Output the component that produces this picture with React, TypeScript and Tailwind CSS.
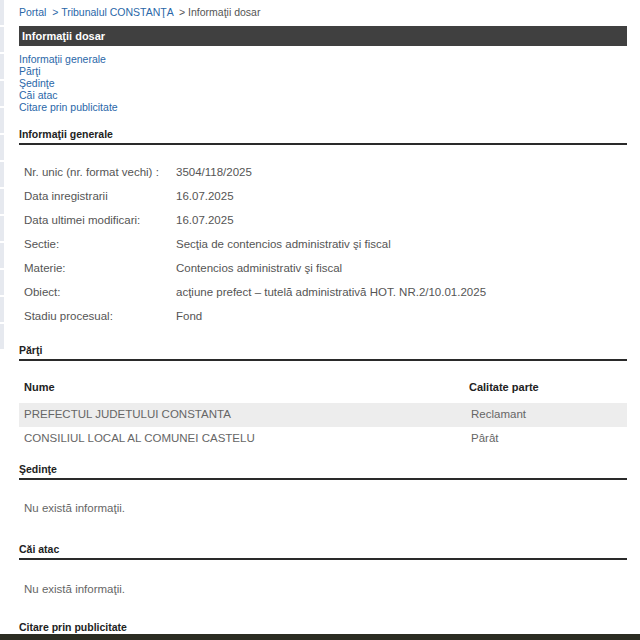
const info: [string, string][] = [
  ["Nr. unic (nr. format vechi) :", "3504/118/2025"],
  ["Data inregistrarii", "16.07.2025"],
  ["Data ultimei modificari:", "16.07.2025"],
  ["Sectie:", "Secţia de contencios administrativ şi fiscal"],
  ["Materie:", "Contencios administrativ şi fiscal"],
  ["Obiect:", "acţiune prefect – tutelă administrativă HOT. NR.2/10.01.2025"],
  ["Stadiu procesual:", "Fond"],
];

const parti = [
  { nume: "PREFECTUL JUDETULUI CONSTANTA", calitate: "Reclamant" },
  { nume: "CONSILIUL LOCAL AL COMUNEI CASTELU", calitate: "Pârât" },
];

const arial = "font-['Liberation_Sans',Arial,sans-serif]";

function Heading({ children }: { children: React.ReactNode }) {
  return (
    <div className={`${arial} text-[10.5px] font-bold text-[#222] leading-[13px] pb-[2px] border-b-2 border-[#2a2a2a]`}>
      {children}
    </div>
  );
}

export default function App() {
  return (
    <div className="flex h-[640px] w-[640px] bg-white overflow-hidden relative">
      {/* left strip */}
      <div className="flex flex-col gap-[2px] w-[4px] shrink-0">
        {Array.from({ length: 13 }).map((_, i) => (
          <div key={i} className="h-[25px] bg-[#e6e9ef]" />
        ))}
      </div>

      <div className="ml-[15px] w-[608px] pt-[6px]">
        <div className={`${arial} text-[10.5px] leading-[13px] text-[#555]`}>
          <span className="text-[#2a67a8]">Portal</span>
          <span className="text-[#2a67a8]"> &nbsp;&gt; Tribunalul CONSTANŢA</span>
          <span> &nbsp;&gt; Informaţii dosar</span>
        </div>

        <div className={`${arial} mt-[7px] h-[20px] bg-[#404040] text-white text-[11px] font-bold leading-[20px] pl-[3px]`}>
          Informaţii dosar
        </div>

        <div className={`${arial} mt-[7px] flex flex-col text-[10.5px] leading-[12px] text-[#2a67a8]`}>
          <span>Informaţii generale</span>
          <span>Părţi</span>
          <span>Şedinţe</span>
          <span>Căi atac</span>
          <span>Citare prin publicitate</span>
        </div>

        <div className="mt-[15px]">
          <Heading>Informaţii generale</Heading>
          <div className={`${arial} text-[11.5px] text-[#555] pt-[16px] pb-[15px]`}>
            {info.map(([k, v]) => (
              <div key={k} className="flex h-[24px] items-center">
                <span className="w-[157px] pl-[5px] shrink-0">{k}</span>
                <span>{v}</span>
              </div>
            ))}
          </div>
        </div>

        <Heading>Părţi</Heading>
        <div className="pt-[14px] pb-[12px]">
          <div className={`${arial} flex h-[24px] mb-[4px] items-center text-[11px] font-bold text-[#222]`}>
            <span className="flex-1 pl-[5px]">Nume</span>
            <span className="w-[158px]">Calitate parte</span>
          </div>
          {parti.map((p, i) => (
            <div
              key={p.nume}
              className={`${arial} flex h-[24px] items-center text-[11.5px] text-[#666] ${i === 0 ? "bg-[#ededed]" : ""}`}
            >
              <span className="flex-1 pl-[5px]">{p.nume}</span>
              <span className="w-[156px]">{p.calitate}</span>
            </div>
          ))}
        </div>

        <Heading>Şedinţe</Heading>
        <p className={`${arial} text-[11.5px] text-[#666] pl-[5px] pt-[21px] pb-[28px] leading-[14px]`}>Nu există informaţii.</p>
        <Heading>Căi atac</Heading>
        <p className={`${arial} text-[11.5px] text-[#666] pl-[5px] pt-[22px] pb-[25px] leading-[14px]`}>Nu există informaţii.</p>
        <Heading>Citare prin publicitate</Heading>
      </div>

      <div className="absolute left-0 right-0 top-[634px] h-[6px] bg-[#2b2c22]" />
    </div>
  );
}
